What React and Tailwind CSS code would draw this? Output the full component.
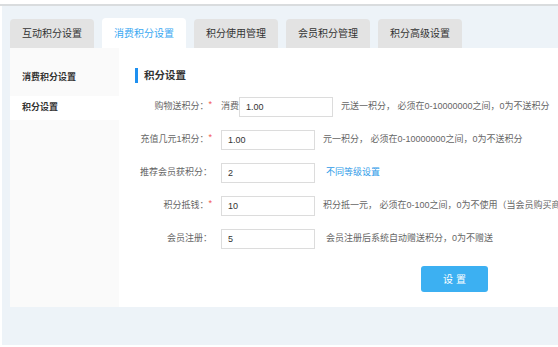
const tabs = ["互动积分设置", "消费积分设置", "积分使用管理", "会员积分管理", "积分高级设置"];

const rows = [
  { label: "购物送积分：", star: true, pre: "消费", value: "1.00", tip: "元送一积分， 必须在0-10000000之间，0为不送积分" },
  { label: "充值几元1积分：", star: true, value: "1.00", tip: "元一积分， 必须在0-10000000之间，0为不送积分" },
  { label: "推荐会员获积分：", value: "2", link: "不同等级设置" },
  { label: "积分抵钱：", star: true, value: "10", tip: "积分抵一元， 必须在0-100之间，0为不使用（当会员购买商品时可使用积分抵扣）" },
  { label: "会员注册：", value: "5", tip: "会员注册后系统自动赠送积分，0为不赠送", pad: true },
];

function FormRow({ row }) {
  return (
    <div className="flex items-center h-[20px] whitespace-nowrap">
      <div className="w-[93px] shrink-0 text-right text-[#666]">
        {row.label}
        {row.star && <span className="text-[#f25555] text-[9px] align-top leading-none">*</span>}
      </div>
      <div className="ml-[9px] flex items-center shrink-0">
        {row.pre && <span className="text-[#666]">{row.pre}</span>}
        <input
          defaultValue={row.value}
          className="w-[94px] h-[20px] border border-[#dcdcdc] bg-white pl-[6px] text-[9px] text-[#333] outline-none"
        />
      </div>
      {row.tip && <span className={`text-[#666] ${row.pad ? "ml-[11px]" : "ml-[8px]"}`}>{row.tip}</span>}
      {row.link && <span className="ml-[11px] text-[#2f9be8]">{row.link}</span>}
    </div>
  );
}

export default function App() {
  return (
    <div
      className="w-[558px] h-[347px] bg-white overflow-hidden text-[9px]"
      style={{ fontFamily: '"Liberation Sans", "Noto Sans CJK SC", sans-serif' }}
    >
      <div className="h-[4px] bg-white" />
      <div className="h-[2px] bg-[#d9dcde]" />
      <div className="ml-[2px] w-[556px] h-[339px] bg-[#edf3f8] pt-[12px] pl-[8px]">
        {/* 标签 */}
        <div className="flex items-end gap-[8px] h-[30px]">
          {tabs.map((t, i) => (
            <div
              key={t}
              className={`w-[84px] flex items-center justify-center rounded-t-[4px] text-[10px] ${
                i === 1 ? "h-[30px] bg-white text-[#3aa8f2]" : "h-[29px] bg-[#e3e3e3] text-[#333]"
              }`}
            >
              {t}
            </div>
          ))}
        </div>

        {/* 内容 */}
        <div className="flex bg-white h-[259px]">
          <div className="w-[109px] shrink-0 bg-[#fafafa] pt-[12px]">
            <div className="h-[36px] flex items-center pl-[12px] font-bold text-[#333]">消费积分设置</div>
            <div className="h-[24px] flex items-center pl-[12px] font-bold text-[#333] bg-white">积分设置</div>
          </div>

          <div className="flex-1 pt-[20px] overflow-hidden">
            <div className="flex items-center ml-[16px] h-[15px]">
              <div className="w-[3px] h-[15px] bg-[#1e90f0]" />
              <span className="ml-[6px] text-[10.5px] font-bold text-[#333]">积分设置</span>
            </div>

            <div className="mt-[14px] flex flex-col gap-[13px]">
              {rows.map(r => (
                <FormRow key={r.label} row={r} />
              ))}
            </div>

            <button className="mt-[17px] ml-[302px] w-[67px] h-[26px] rounded-[3px] bg-[#3cb0f2] text-white text-[10px]">
              设 置
            </button>
          </div>
        </div>
      </div>
    </div>
  );
}
